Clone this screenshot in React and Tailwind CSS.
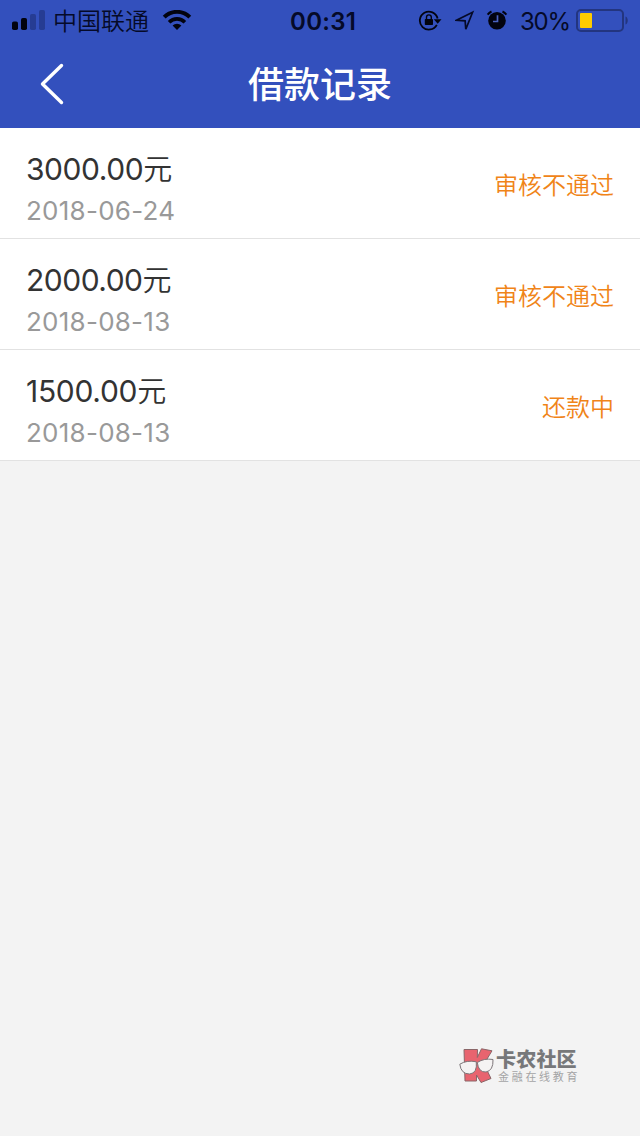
const records = [
  { amount: '3000.00', date: '2018-06-24', status: '审核不通过', tracking: 'tracking-[-0.45px]' },
  { amount: '2000.00', date: '2018-08-13', status: '审核不通过', tracking: 'tracking-[-0.5px]' },
  { amount: '1500.00', date: '2018-08-13', status: '还款中', tracking: 'tracking-[-0.3px]' },
];

function StatusBar() {
  return (
    <div className="flex h-10 items-center pt-px text-[#050a28]">
      <svg className="ml-3 shrink-0" width="34" height="22" viewBox="0 0 34 22">
        <rect x="0" y="11.500" width="6" height="8.500" rx="1.8" fill="#02030f" />
        <rect x="9" y="8" width="6" height="12" rx="1.8" fill="#02030f" />
        <rect x="18" y="4" width="6" height="16" rx="1.8" fill="#263c93" />
        <rect x="27" y="0" width="6" height="20" rx="1.8" fill="#263c93" />
      </svg>
      <span className="ml-[7px] w-[97px] shrink-0 whitespace-nowrap pt-[3px] text-2xl font-[350] leading-10">中国联通</span>
      <svg className="ml-3 shrink-0" width="30" height="22" viewBox="0 0 30 22" fill="none" stroke="#02030f">
        <path d="M2.2 7.200a18 18 0 0 1 25.6 0" strokeWidth="4" />
        <path d="M7.1 12.200a11 11 0 0 1 15.8 0" strokeWidth="3.6" />
        <path d="M15 20l-4.4-4.4a6.2 6.2 0 0 1 8.8 0z" fill="#02030f" stroke="none" />
      </svg>
      <span className="ml-[98px] w-[68px] shrink-0 whitespace-nowrap pt-0.5 text-2xl font-semibold leading-10 tracking-[0.3px]">00:31</span>
      <svg className="ml-[60px] shrink-0" width="24" height="22" viewBox="0 0 24 22">
        <path d="M19.600 8.500A9 9 0 1 0 18.800 14.800" fill="none" stroke="#02030f" strokeWidth="1.800" />
        <path d="M15.800 9.200h7.700l-3.800 4.500z" fill="#02030f" />
        <rect x="6.800" y="9" width="8.200" height="6" rx="0.8" fill="#02030f" />
        <path d="M8.500 9.500V7.300a2.400 2.400 0 0 1 4.800 0v2.200" fill="none" stroke="#02030f" strokeWidth="1.400" />
      </svg>
      <svg className="ml-[13px] shrink-0" width="20" height="22" viewBox="0 0 20 22">
        <path d="M17.600 2.300L1.500 10.200l8.600.6.700 8.500z" fill="none" stroke="#050a28" strokeWidth="1.700" strokeLinejoin="miter" />
      </svg>
      <svg className="ml-[11px] shrink-0" width="22" height="22" viewBox="0 0 22 22">
        <circle cx="11" cy="10.700" r="8.800" fill="#02030f" />
        <path d="M1.600 4.600A11 11 0 0 1 5.500 1.500M16.500 1.500a11 11 0 0 1 3.900 3.100" stroke="#02030f" strokeWidth="2" fill="none" />
        <path d="M11.500 5.200v6.300H7" fill="none" stroke="#4a62c0" strokeWidth="1.700" />
      </svg>
      <span className="ml-[12px] w-[52px] shrink-0 whitespace-nowrap pt-0.5 text-2xl leading-10 tracking-[-1.200px]">30%</span>
      <svg className="ml-1 shrink-0" width="54" height="24" viewBox="0 0 54 24">
        <rect x="1" y="1" width="46" height="21" rx="4" fill="none" stroke="#23357f" strokeWidth="2" />
        <rect x="4" y="4" width="12" height="15" rx="1" fill="#ffcc00" />
        <path d="M49.500 7.500c3 1 3 7 0 8z" fill="#23357f" />
      </svg>
    </div>
  );
}

function Watermark() {
  return (
    <div className="flex h-10 w-[120px] items-start">
      <svg className="mt-px shrink-0" width="36" height="38" viewBox="0 0 36 38">
        <path
          d="M5 2.500H18.500L18.300 10.500 22.500 1.800 33 3.800 25 17 32 31.500 22 35.500 17.500 28V34H6z"
          fill="#e8646f" stroke="#8a6668" strokeWidth="1" strokeLinejoin="round"
        />
        <path d="M.8 17.200Q8 12.800 17.300 14.800 18.500 26.300 10.500 27 2 27 .8 17.200z" fill="#f5f3f3" stroke="#7d7679" strokeWidth="1" />
        <path d="M18.300 15.500Q25 11 34 12.500 34.500 23.500 27 25 19.500 25.500 18.300 15.500z" fill="#f5f3f3" stroke="#7d7679" strokeWidth="1" />
      </svg>
      <div className="ml-[1px] whitespace-nowrap pt-[3px]">
        <div className="h-[22px] text-[20px] font-black leading-[22px] tracking-[0.200px] text-[#77787a]">卡农社区</div>
        <div className="ml-0.5 h-3 text-[11px] leading-3 tracking-[2.700px] text-[#a4a4a5]">金融在线教育</div>
      </div>
    </div>
  );
}

export default function App() {
  return (
    <div className="flex h-[1136px] w-[640px] flex-col overflow-hidden bg-[#f3f3f3] font-['Inter','Noto_Sans_CJK_SC',sans-serif]">
      <header className="h-32 shrink-0 bg-[#3350bd]">
        <StatusBar />
        <div className="grid h-[88px] grid-cols-[120px_1fr_120px] items-center">
          <button aria-label="返回" className="ml-10 w-6">
            <svg width="24" height="42" viewBox="0 0 24 42" fill="none" stroke="#ffffff" strokeWidth="3.400" strokeLinecap="round" strokeLinejoin="round">
              <path d="M21.500 2.500L2.500 21 21.500 39.500" />
            </svg>
          </button>
          <h1 className="pt-0.5 text-center text-4xl font-medium leading-[52px] text-white">借款记录</h1>
        </div>
      </header>
      <main>
        {records.map((r, i) => (
          <section key={i} className="flex h-[111px] items-center justify-between border-b border-[#e2e2e2] bg-white px-[26px]">
            <div className="pt-2.5">
              <div className={`h-[46px] whitespace-nowrap text-[30px] font-[380] leading-[46px] text-[#333333] ${r.tracking}`}>
                {r.amount}<span className="text-[29px] font-[350]">元</span>
              </div>
              <div className="h-[38px] whitespace-nowrap text-[26px] font-[370] leading-[38px] tracking-[0.250px] text-[#999999]">{r.date}</div>
            </div>
            <span className="pt-1.5 text-2xl font-[350] text-[#f08418]">{r.status}</span>
          </section>
        ))}
      </main>
      <footer className="mt-auto flex h-[90px] justify-end pr-[61px]">
        <Watermark />
      </footer>
    </div>
  );
}
